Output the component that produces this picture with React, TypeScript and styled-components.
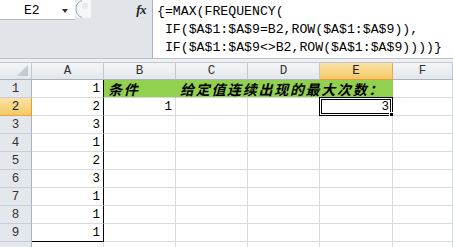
import React from "react";
import styled, { createGlobalStyle, css } from "styled-components";

const Global = createGlobalStyle`
  html, body { margin: 0; padding: 0; background: #ffffff; }
  body { width: 453px; height: 247px; overflow: hidden; }
  #root { width: 453px; height: 247px; overflow: hidden; }
`;

const Page = styled.div`
  width: 453px;
  height: 247px;
  display: flex;
  flex-direction: column;
  background: #ffffff;
  overflow: hidden;
`;

const FormulaBar = styled.div`
  display: flex;
  height: 59px;
  flex: none;
  background: #e1e5ea;
  border-bottom: 1px solid #b9c0c9;
  box-sizing: border-box;
`;

const LeftPane = styled.div`
  width: 152px;
  flex: none;
  display: flex;
  flex-direction: column;
`;

const NameRow = styled.div`
  display: flex;
  align-items: center;
  height: 20px;
`;

const NameBox = styled.div`
  width: 75px;
  height: 20px;
  box-sizing: border-box;
  background: #ffffff;
  border-bottom: 1px solid #b5bcc6;
  display: flex;
  align-items: center;
  position: relative;
  font-family: "Liberation Mono", monospace;
  font-size: 13px;
  color: #000;
`;

const NameText = styled.span`
  position: absolute;
  left: 24px;
  top: 3px;
`;

const Arrow = styled.span`
  position: absolute;
  left: 62px;
  top: 9px;
  width: 0;
  height: 0;
  border-left: 3.5px solid transparent;
  border-right: 3.5px solid transparent;
  border-top: 4px solid #333;
`;

const Knob = styled.svg`
  flex: none;
  display: block;
`;

const Fx = styled.span`
  margin-left: auto;
  margin-right: 6px;
  font-family: "Liberation Serif", serif;
  font-style: italic;
  font-weight: bold;
  font-size: 13px;
  color: #222;
  letter-spacing: -0.5px;
`;

const FormulaInput = styled.div`
  flex: 1;
  background: #ffffff;
  border-left: 1px solid #a7b0bc;
  padding: 3px 0 0 4px;
  font-family: "Liberation Mono", monospace;
  font-size: 13.2px;
  line-height: 18px;
  color: #000;
  white-space: pre;
  overflow: hidden;
`;

const Band = styled.div`
  height: 3px;
  flex: none;
  background: #eef0f3;
  border-bottom: 1px solid #c3c8cf;
`;

const Grid = styled.div`
  display: grid;
  grid-template-columns: 32px 72px 72px 72px 72px 73px 1fr;
  grid-auto-rows: 18px;
  grid-template-rows: 17px;
`;

const HeadCell = styled.div<{ $active?: boolean }>`
  box-sizing: border-box;
  border-right: 1px solid #c2c7ce;
  border-bottom: 1px solid #aab2bd;
  background: linear-gradient(#f2f4f7, #e3e7ec);
  display: flex;
  align-items: center;
  justify-content: center;
  font-family: "Liberation Mono", monospace;
  font-size: 12.5px;
  color: #333;
  position: relative;
  ${(p) =>
    p.$active &&
    css`
      background: linear-gradient(#fbe3a6, #f5c865);
      border-right-color: #e4a74a;
      border-bottom-color: #e29a3b;
      color: #222;
    `}
`;

const RowHead = styled(HeadCell)`
  border-right-color: #a9b2bd;
  border-bottom-color: #c9ced5;
  background: #e4e8ed;
  ${(p) =>
    p.$active &&
    css`
      background: linear-gradient(#fbe3a6, #f5c865);
      border-right-color: #e29a3b;
      border-bottom-color: #e4a74a;
    `}
`;

const Corner = styled.svg`
  position: absolute;
  right: 3px;
  bottom: 3px;
`;

const Cell = styled.div<{
  $green?: boolean;
  $span?: number;
  $edgeRight?: boolean;
  $edgeBottom?: boolean;
  $align?: "left" | "right";
}>`
  box-sizing: border-box;
  position: relative;
  border-right: 1px solid ${(p) => (p.$edgeRight ? "#000" : p.$green ? "#92d050" : "#d9dadb")};
  border-bottom: 1px solid ${(p) => (p.$edgeBottom ? "#000" : "#d9dadb")};
  background: ${(p) => (p.$green ? "#92d050" : "#ffffff")};
  grid-column: span ${(p) => p.$span ?? 1};
  display: flex;
  align-items: center;
  justify-content: ${(p) => (p.$align === "right" ? "flex-end" : "flex-start")};
  padding: 0 3px 0 4px;
  font-family: "Liberation Mono", monospace;
  font-size: 12.5px;
  color: #000;
  white-space: nowrap;
  overflow: visible;
`;

const Label = styled.span`
  font-family: "Noto Sans CJK SC", "Noto Sans", sans-serif;
  font-weight: bold;
  font-style: italic;
  font-size: 14px;
  letter-spacing: 1.7px;
  line-height: 1;
  margin-top: 1px;
`;

const Selection = styled.div`
  position: absolute;
  left: -1px;
  top: -1px;
  right: -1px;
  bottom: -1px;
  border: 1px solid #000;
  box-shadow: inset 0 0 0 1px #fff, inset 0 0 0 2px #000;
  pointer-events: none;
`;

const Handle = styled.div`
  position: absolute;
  right: -4px;
  bottom: -4px;
  width: 5px;
  height: 5px;
  background: #000;
  border: 1px solid #fff;
`;

const colHeads = ["A", "B", "C", "D", "E", "F"];
const aValues = [1, 2, 3, 1, 2, 3, 1, 1, 1];

export default function App() {
  return (
    <Page>
      <Global />
      <FormulaBar>
        <LeftPane>
          <NameRow>
            <NameBox>
              <NameText>E2</NameText>
              <Arrow />
            </NameBox>
            <Knob width="16" height="20" viewBox="0 0 16 20">
              <path d="M6 0 A9 9 0 0 0 6 18 L16 18 L16 0 Z" fill="#f4f6f8" />
              <path d="M7 0.5 A9 9 0 0 0 7 17.5" fill="none" stroke="#9aa4b1" strokeWidth="1" />
              <circle cx="10" cy="6" r="3.2" fill="#e6e9ed" />
            </Knob>
            <Fx>fx</Fx>
          </NameRow>
        </LeftPane>
        <FormulaInput>
          {"{=MAX(FREQUENCY(\n IF($A$1:$A$9=B2,ROW($A$1:$A$9)),\n IF($A$1:$A$9<>B2,ROW($A$1:$A$9))))}"}
        </FormulaInput>
      </FormulaBar>
      <Band />
      <Grid>
        <HeadCell>
          <Corner width="11" height="11" viewBox="0 0 11 11">
            <polygon points="11,0 11,11 0,11" fill="#c4c9d0" />
          </Corner>
        </HeadCell>
        {colHeads.map((c) => (
          <HeadCell key={c} $active={c === "E"}>
            {c}
          </HeadCell>
        ))}
        {aValues.map((v, i) => {
          const r = i + 1;
          return (
            <React.Fragment key={r}>
              <RowHead $active={r === 2}>{r}</RowHead>
              <Cell $align="right" $edgeRight $edgeBottom={r === 9}>
                {v}
              </Cell>
              {r === 1 ? (
                <>
                  <Cell $green>
                    <Label>条件</Label>
                  </Cell>
                  <Cell $green $span={3}>
                    <Label>给定值连续出现的最大次数：</Label>
                  </Cell>
                </>
              ) : r === 2 ? (
                <>
                  <Cell $align="right">1</Cell>
                  <Cell />
                  <Cell />
                  <Cell $align="right">
                    3
                    <Selection>
                      <Handle />
                    </Selection>
                  </Cell>
                </>
              ) : (
                <>
                  <Cell />
                  <Cell />
                  <Cell />
                  <Cell />
                </>
              )}
              <Cell />
            </React.Fragment>
          );
        })}
        <RowHead />
        <Cell />
        <Cell />
        <Cell />
        <Cell />
        <Cell />
        <Cell />
      </Grid>
    </Page>
  );
}
